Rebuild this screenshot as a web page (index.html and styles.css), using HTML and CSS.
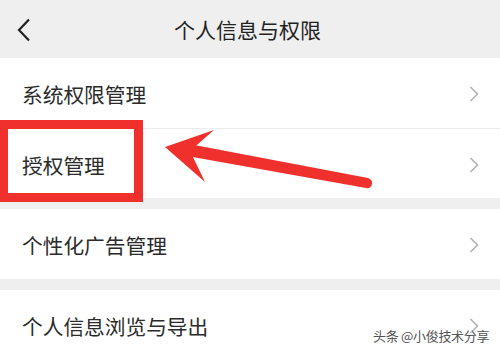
FILE: index.html
```html
<!DOCTYPE html>
<html lang="zh">
<head>
    <meta charset="utf-8">
    <title>个人信息与权限</title>
    <link rel="stylesheet" href="styles.css">
</head>
<body>
<div class="screen">
    <div class="header">
        <svg class="back" width="14" height="24" viewBox="0 0 14 24">
            <path d="M12 1.5 L2 12 L12 22.5" fill="none" stroke="#222" stroke-width="2.2"/>
        </svg>
        <div class="title">个人信息与权限</div>
    </div>
    <div class="group">
        <div class="row">
            <span>系统权限管理</span>
            <svg class="more" width="10" height="16" viewBox="0 0 10 16"><path d="M1.5 1 L8.5 8 L1.5 15" fill="none" stroke="#b3b3b3" stroke-width="1.6"/></svg>
        </div>
        <div class="row">
            <span>授权管理</span>
            <svg class="more" width="10" height="16" viewBox="0 0 10 16"><path d="M1.5 1 L8.5 8 L1.5 15" fill="none" stroke="#b3b3b3" stroke-width="1.6"/></svg>
        </div>
    </div>
    <div class="group">
        <div class="row">
            <span>个性化广告管理</span>
            <svg class="more" width="10" height="16" viewBox="0 0 10 16"><path d="M1.5 1 L8.5 8 L1.5 15" fill="none" stroke="#b3b3b3" stroke-width="1.6"/></svg>
        </div>
    </div>
    <div class="group">
        <div class="row">
            <span>个人信息浏览与导出</span>
            <svg class="more" width="10" height="16" viewBox="0 0 10 16"><path d="M1.5 1 L8.5 8 L1.5 15" fill="none" stroke="#b3b3b3" stroke-width="1.6"/></svg>
        </div>
    </div>

    <div class="mark-box"></div>
    <svg class="mark-arrow" width="500" height="354" viewBox="0 0 500 354">
        <path d="M189 144 L368 178 Q373 180 372 184 Q371 189 366 188 L187 156 Z" fill="#f0302c"/>
        <path d="M165 147 L214 130 L190 151 L205 182 Z" fill="#f0302c"/>
    </svg>
    <div class="watermark">头条 @小俊技术分享</div>
</div>
</body>
</html>
```

FILE: styles.css
```css
*{
    margin:0;
    padding:0;
    box-sizing:border-box;
}
body{
    width:500px;
    height:354px;
    overflow:hidden;
    background:#efefef;
    font-family:"Noto Sans CJK SC", "Noto Sans", sans-serif;
    color:#2b2b2b;
}
.screen{
    position:relative;
    width:500px;
    height:354px;
}
.header{
    height:58px;
    display:flex;
    align-items:center;
    justify-content:center;
    position:relative;
    background:#efefef;
}
.header .back{
    position:absolute;
    left:17px;
    top:18px;
}
.header .title{
    font-size:21px;
    color:#222;
    margin-left:-5px;
}
.group{
    background:#fff;
    margin-bottom:11px;
}
.row{
    height:70px;
    display:flex;
    align-items:center;
    justify-content:space-between;
    padding:2px 22px 0 22px;
    font-size:20.7px;
}
.row + .row{
    border-top:1px solid #ececec;
}
.row .more{
    margin-right:-1px;
}
.mark-box{
    position:absolute;
    left:-1px;
    top:120px;
    width:144px;
    height:82px;
    border:9px solid #f0302c;
}
.mark-arrow{
    position:absolute;
    left:0;
    top:0;
}
.watermark{
    position:absolute;
    left:373px;
    top:326px;
    font-size:13px;
    color:#555;
    letter-spacing:-0.3px;
    text-shadow:0 0 2px #fff, 0 0 2px #fff;
}
```
